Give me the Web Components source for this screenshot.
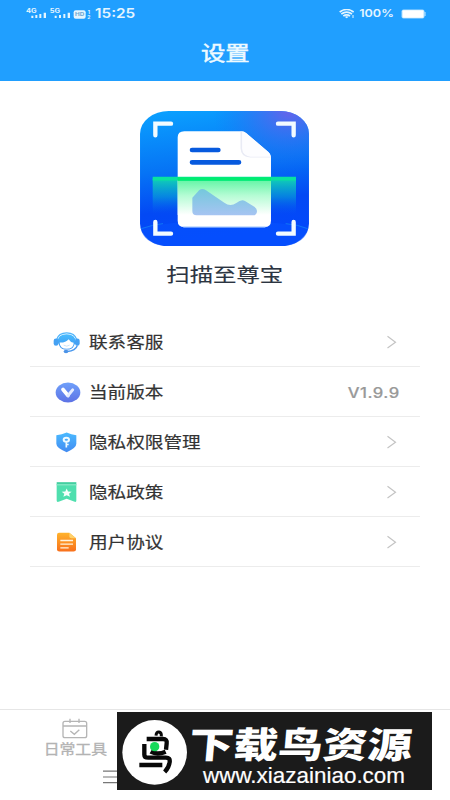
<!DOCTYPE html>
<html lang="zh-CN">
<head>
<meta charset="utf-8">
<title>设置</title>
<style>
body{margin:0;width:450px;height:800px;overflow:hidden;background:#fff;font-family:"Liberation Sans","Noto Sans CJK SC",sans-serif}
</style>
</head>
<body>
<settings-page></settings-page>
<script>
const define = (name, html) => customElements.define(name, class extends HTMLElement {
  constructor() {
    super();
    this.attachShadow({mode: 'open'}).innerHTML = typeof html === 'function' ? html(this) : html;
  }
});

define('wide-text', `<style>
:host{display:inline-block;white-space:nowrap;line-height:1;transform:scaleX(var(--stretch,1.2));transform-origin:var(--origin,left) center;-webkit-text-stroke:var(--weight,0) currentColor}
</style><slot></slot>`);

define('status-bar', `<style>
:host{display:flex;justify-content:space-between;height:28px;padding:0 24px 0 26px;box-sizing:border-box;color:#e4f5ff;font-family:Inter,"Liberation Sans",sans-serif;font-weight:600}
div{display:flex;align-items:center}
svg{display:block}
wide-text{font-size:12.8px}
.pct{font-size:10.5px;--stretch:1.2;--origin:right;margin:1px 7px 0 0}
.wifi{margin-right:10px}
</style>
<div>
<svg width="69" height="14" viewBox="78 21 207 42" fill="#e4f5ff">
<g font-family="Inter,Liberation Sans" font-weight="700" font-size="17"><text x="78" y="38" textLength="32" lengthAdjust="spacingAndGlyphs">4G</text><text x="149" y="38" textLength="31" lengthAdjust="spacingAndGlyphs">5G</text></g>
<path d="M94 47h6v7h-6zM106 45h6v9h-6zM118 42h6v12h-6zM131 38h7v16h-7zM164 47h6v7h-6zM177 45h6v9h-6zM190 42h6v12h-6zM203 38h7v16h-7z"/>
<rect x="221" y="31" width="36" height="25" rx="6"/>
<text x="225" y="49" font-family="Inter,Liberation Sans" font-weight="700" font-size="15" fill="#6fa6cf" textLength="28" lengthAdjust="spacingAndGlyphs">HD</text>
<g font-family="Inter,Liberation Sans" font-weight="700" font-size="15"><text x="263" y="41">1</text><text x="262" y="57">2</text></g>
</svg>
<wide-text>15:25</wide-text>
</div>
<div>
<svg class="wifi" width="16" height="11" viewBox="344 28 48 33" fill="none" stroke="#e4f5ff" stroke-width="5"><path d="M346 37Q367 22 388 37M351 43Q367 32 383 43M357 49Q367 42 377 49"/><path d="M361 51Q367 48 373 51L367 56z" fill="#e4f5ff" stroke="none"/><path d="M386 46v9" stroke-width="3"/></svg>
<wide-text class="pct">100%</wide-text>
<svg width="25" height="10" viewBox="0 0 25 10"><rect x=".5" y=".5" width="23" height="9" rx="2" fill="#a9dcff"/><rect x="1.5" y="1.2" width="21" height="7.6" rx="1" fill="#fff"/><path d="M24 3v4" stroke="#c9eaff"/></svg>
</div>`);

define('page-header', `<style>
:host{display:flex;flex-direction:column;height:81px;background:#209fff}
.title{flex:1;display:flex;justify-content:center;align-items:center;color:#eefaff;font-size:20.3px;--origin:center;--weight:.5px}
</style><status-bar></status-bar><div class="title"><wide-text><slot></slot></wide-text></div>`);

define('app-brand', `<style>
:host{display:flex;flex-direction:column;align-items:center;padding-top:30px;height:206px;color:#2b3441;font-size:19.5px;--origin:center;--weight:.15px}
svg{display:block;margin-right:1px}
wide-text{margin-top:20px}
</style>
<svg width="169" height="135.3" viewBox="31 33 507 406">
<defs>
<linearGradient id="b" x1="0" y1="0" x2=".15" y2="1"><stop offset="0" stop-color="#0ba2ff"/><stop offset=".45" stop-color="#0674f5"/><stop offset=".75" stop-color="#0349f4"/><stop offset="1" stop-color="#0348fb"/></linearGradient>
<radialGradient id="p" cx=".88" cy="0" r=".45"><stop offset="0" stop-color="#6862ea"/><stop offset=".5" stop-color="#3a6df0" stop-opacity=".55"/><stop offset="1" stop-color="#1575f6" stop-opacity="0"/></radialGradient>
<linearGradient id="s" x1="0" y1="0" x2="0" y2="1"><stop offset="0" stop-color="#10d0b4"/><stop offset=".5" stop-color="#079dd8" stop-opacity=".65"/><stop offset="1" stop-color="#0654f5" stop-opacity="0"/></linearGradient>
<linearGradient id="g" x1="0" y1="0" x2="0" y2="1"><stop offset="0" stop-color="#64f5a6"/><stop offset=".45" stop-color="#b6fcd5"/><stop offset="1" stop-color="#fff"/></linearGradient>
<linearGradient id="m" x1="0" y1="0" x2="0" y2="1"><stop offset="0" stop-color="#74c8dc"/><stop offset="1" stop-color="#a6c4f2"/></linearGradient>
</defs>
<rect x="31" y="33" width="507" height="406" rx="86" ry="68" fill="url(#b)"/>
<rect x="31" y="33" width="507" height="406" rx="86" ry="68" fill="url(#p)"/>
<path d="M33 384Q285 334 536 384C532 415 500 438 450 439H119C69 438 37 415 33 384Z" fill="#0753ff" opacity=".55"/>
<path d="M35 386Q70 374 100 371M468 371Q505 374 534 386" fill="none" stroke="#168ef5" stroke-width="2"/>
<rect x="69" y="236" width="430" height="110" fill="url(#s)"/>
<path d="M164 94H336Q343 94 350 100L416 156Q424 163 424 172V362Q424 381 404 381H164Q144 381 144 362V112Q144 94 164 94Z" fill="#fff"/>
<rect x="160" y="378" width="248" height="6" rx="3" fill="#a8cbff" opacity=".6"/>
<path d="M335 95V145Q336 170 362 170H423" fill="#fbfcff" stroke="#e9ebf5" stroke-width="5"/>
<path d="M338 94Q345 96 350 100L416 156Q424 163 423 170H362Q340 168 338 145Z" fill="#fdfdff"/>
<path d="M187 150H266M187 187H328" stroke="#075ade" stroke-width="14" stroke-linecap="round"/>
<rect x="144" y="240" width="280" height="105" fill="url(#g)"/>
<path d="M188 293L209 270Q218 263 229 271L284 308Q302 322 320 309Q336 296 346 303L374 320Q382 325 382 333Q382 346 369 346H201Q188 346 188 333Z" fill="url(#m)"/>
<path d="M69 236H499" stroke="#08e2a0" stroke-width="11"/><path d="M144 237H424" stroke="#00ed70" stroke-width="11"/>
<path d="M77 106V71H124M445 71H492V106M77 366V401H124M445 401H492V366" fill="none" stroke="#f2fbff" stroke-width="13" stroke-linecap="round"/>
</svg>
<wide-text><slot></slot></wide-text>`);

const icons = {
  service: [28.5, `<defs><linearGradient id="a" x2="0" y2="1"><stop stop-color="#49bdff"/><stop offset="1" stop-color="#3c92ee"/></linearGradient></defs>
<path d="M80 57Q86 37 110 37Q134 37 140 57" fill="none" stroke="#4fb4fb" stroke-width="4"/><path d="M83 65Q83 41 110 41Q137 41 137 65L131 77Q127 87 110 87Q93 87 89 77Z" fill="url(#a)"/><path d="M89 66Q106 67 116 56Q121 65 131 67Q132 85 110 85Q89 85 89 66Z" fill="#fff"/><rect x="71" y="54" width="14" height="22" rx="7" fill="#45a1f3"/><rect x="135" y="54" width="14" height="22" rx="7" fill="#45a1f3"/><path d="M142 75Q137 91 112 93" fill="none" stroke="#4b99ee" stroke-width="4"/><ellipse cx="108" cy="93" rx="7" ry="5" fill="#4b93e8"/><path d="M101 74Q110 80 119 74" fill="none" stroke="#b0d6f8" stroke-width="2"/>`],
  version: [178.5, `<defs><linearGradient id="a" x2="0" y2="1"><stop stop-color="#6fa0fa"/><stop offset="1" stop-color="#5d72e5"/></linearGradient></defs><ellipse cx="114" cy="216" rx="37" ry="30" fill="url(#a)"/><path d="M99 207L114 225" stroke="#fff" stroke-width="11" stroke-linecap="round"/><path d="M114 225L128 208" stroke="#e4ecff" stroke-width="9" stroke-linecap="round"/>`],
  shield: [28.5, `<defs><linearGradient id="a" x2="0" y2="1"><stop stop-color="#4abaff"/><stop offset="1" stop-color="#438bf1"/></linearGradient></defs><path d="M110 36Q124 43 139 44V70Q139 83 110 95Q79 83 79 70V44Q96 43 110 36Z" fill="url(#a)"/><ellipse cx="109" cy="58" rx="8" ry="6" fill="none" stroke="#eefaff" stroke-width="6"/><path d="M109 65V81M110 72H116" fill="none" stroke="#eefaff" stroke-width="5"/>`],
  policy: [178.5, `<path d="M80 192H139V240Q139 247 132 243L110 235L88 243Q80 247 80 240Z" fill="#4fdfae"/><path d="M80 185H139V194H80Z" fill="#43cfa0"/><path d="M81 193H138" stroke="#9bf2d3" stroke-width="3"/><path d="M110 204L114 213L125 214L117 220L120 229L110 224L100 229L103 220L95 214L106 213Z" fill="#f6fffb"/>`],
  agreement: [328.5, `<defs><linearGradient id="a" x2="0" y2="1"><stop stop-color="#ffb32c"/><stop offset="1" stop-color="#f8701c"/></linearGradient></defs><path d="M87 337H118L138 353V387Q138 393 131 393H88Q81 393 81 387V343Q81 337 87 337Z" fill="url(#a)"/><path d="M118 337L138 353H124Q118 353 118 348Z" fill="#ffd16b"/><path d="M91 360H129M91 371H129M91 382H116" stroke="#fff3dd" stroke-width="4"/>`]
};

define('setting-row', el => `<style>
:host{display:flex;align-items:center;height:50px;box-sizing:border-box;border-bottom:1px solid #ececec;padding:0 20px 0 22px;color:#333;font-size:15.5px;--weight:.2px}
svg{display:block;flex:none}
.label{margin:2px auto 0 7px}
.value{--origin:right;--stretch:1.19;color:#999;font:500 14px Inter,"Liberation Sans",sans-serif;letter-spacing:.4px;margin-top:2px}
.arrow{margin-right:3px}
</style>
<svg width="30" height="24" viewBox="66 ${icons[el.getAttribute('icon')][0]} 90 72">${icons[el.getAttribute('icon')][1]}</svg>
<wide-text class="label"><slot></slot></wide-text>
${el.hasAttribute('value') ? `<wide-text class="value">${el.getAttribute('value')}</wide-text>` : `<svg class="arrow" width="11" height="14" viewBox="0 0 11 14"><path d="M1.5 1.2L9.5 7.2L1.5 13" fill="none" stroke="#c4c4c4" stroke-width="1.2"/></svg>`}`);

define('tab-bar', `<style>
:host{display:flex;flex-direction:column;height:91px;box-sizing:border-box;border-top:1px solid #e6e6e6;color:#b3b3b3}
.tab{width:150px;display:flex;flex-direction:column;align-items:center;padding-top:8px;font-size:13.2px;--origin:center;--weight:.3px}
wide-text{margin-top:4px}
.menu{margin:14px 0 0 102px}
svg{display:block}
</style>
<div class="tab"><svg width="26" height="21" viewBox="187 69 78 63" fill="none" stroke="#b5b5b5" stroke-width="4"><rect x="190" y="79" width="71" height="49" rx="6"/><path d="M190 93H261M211 71V84M238 71V84"/><path d="M212 108L224 118L239 104"/></svg><wide-text>日常工具</wide-text></div>
<svg class="menu" width="20" height="14" viewBox="0 0 20 14" stroke="#777" stroke-width="1.2"><path d="M1 1.2H20M1 7H20M1 12.6H20"/></svg>`);

define('site-badge', `<style>
:host{position:absolute;left:117px;top:712px;width:315px;height:78px;background:#1b1b1b;color:#fff;display:flex}
.logo{margin:8px 0 0 5px;display:block;flex:none}
.words{display:block}
</style>
<svg class="logo" width="65" height="65" viewBox="366 75 195 195"><circle cx="464" cy="172" r="97" fill="#fff"/><g fill="none" stroke="#080808" stroke-width="13"><path d="M468 122Q469 110 477 111Q485 112 484 124" stroke-width="9"/><path d="M440 132H489Q502 132 500 145L498 164"/><path d="M433 147V179Q433 188 445 188H498Q511 188 509 201Q507 218 494 231"/><path d="M452 170Q472 181 497 170M418 210H487"/></g><circle cx="464" cy="155" r="14" fill="#16d95a"/></svg>
<svg class="words" width="245" height="78" viewBox="187 712 245 78" fill="#fff"><g transform="translate(188 758.3) skewX(-5)"><text font-family="Noto Sans CJK SC" font-weight="900" font-size="36" textLength="223" lengthAdjust="spacingAndGlyphs">下载鸟资源</text></g><text x="203" y="782.5" font-family="Liberation Sans" font-size="22.5" textLength="202" lengthAdjust="spacingAndGlyphs" stroke="#fff" stroke-width=".2">www.xiazainiao.com</text></svg>`);

define('settings-page', `<style>
:host{display:flex;flex-direction:column;width:450px;height:800px;position:relative;background:#fff}
main{flex:1}
.list{margin:0 30px}
tab-bar{flex:none}
</style>
<page-header>设置</page-header>
<main>
<app-brand>扫描至尊宝</app-brand>
<div class="list">
<setting-row icon="service">联系客服</setting-row>
<setting-row icon="version" value="V1.9.9">当前版本</setting-row>
<setting-row icon="shield">隐私权限管理</setting-row>
<setting-row icon="policy">隐私政策</setting-row>
<setting-row icon="agreement">用户协议</setting-row>
</div>
</main>
<tab-bar></tab-bar>
<site-badge></site-badge>`);
</script>
</body>
</html>
